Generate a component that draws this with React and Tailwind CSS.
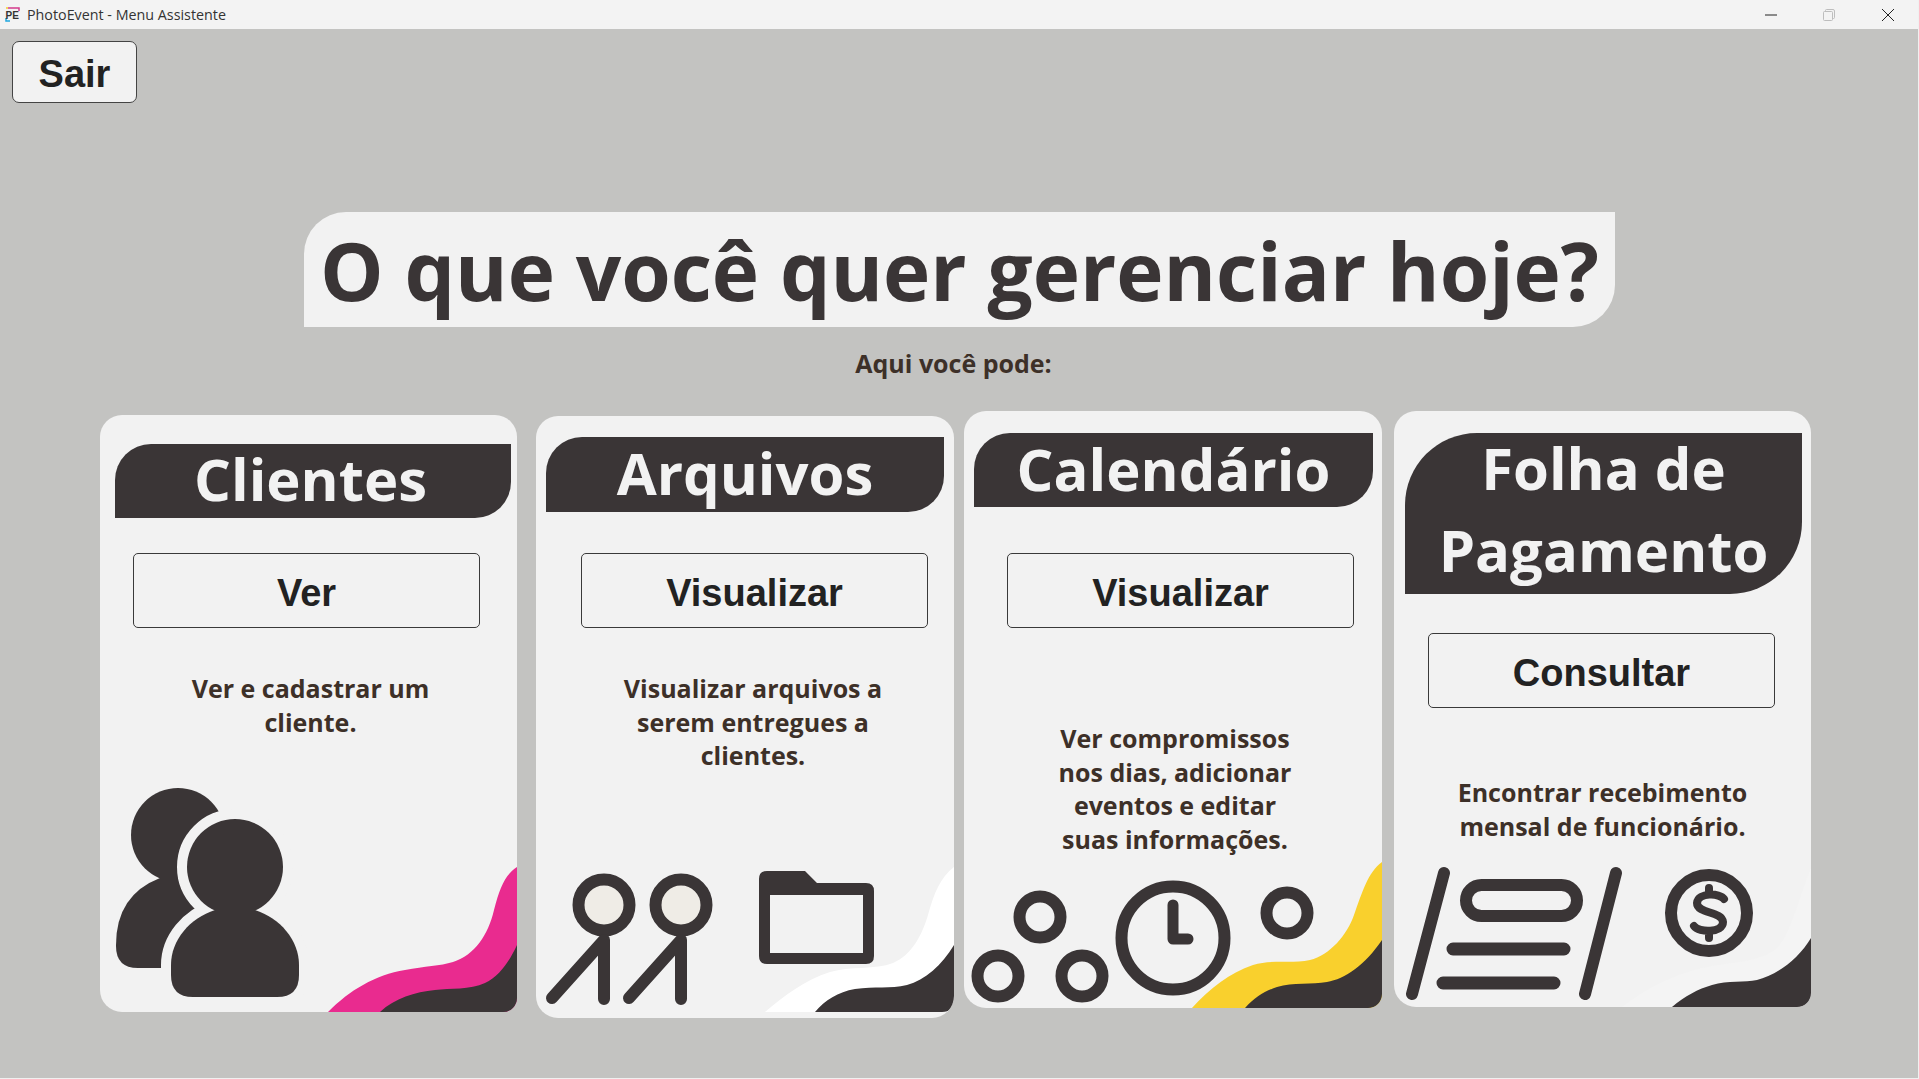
import React from 'react';

const DARK = '#3a3536';
const CARD = '#f2f2f2';

const ClientesArt = () => (
  <svg className="absolute bottom-0 left-0" width="417" height="232" viewBox="100 780 417 232">
    <circle cx="178" cy="835" r="47" fill={DARK} />
    <path d="M116 945 Q116 895 160 878 L230 878 L230 968 L138 968 Q116 968 116 946 Z" fill={DARK} />
    <g fill={CARD} stroke={CARD} strokeWidth="20">
      <circle cx="235" cy="867" r="48" />
      <path d="M171 965 C171 940 190 918 215 910 L255 910 C280 918 299 940 299 965 V975 Q299 997 277 997 H193 Q171 997 171 975 Z" />
    </g>
    <g fill={DARK}>
      <circle cx="235" cy="867" r="48" />
      <path d="M171 965 C171 940 190 918 215 910 L255 910 C280 918 299 940 299 965 V975 Q299 997 277 997 H193 Q171 997 171 975 Z" />
    </g>
    <path d="M328 1012 C350 990 375 975 405 970 C425 966 440 966 453 962 C475 955 488 935 494 910 C500 887 505 875 517 867 V1012 Z" fill="#e92b8f" />
    <path d="M380 1012 C395 998 415 992 435 990 C450 988 470 990 485 983 C500 976 510 960 517 945 V1012 Z" fill={DARK} />
  </svg>
);

const ArquivosArt = () => (
  <svg className="absolute bottom-0 left-0" width="418" height="202" viewBox="536 816 418 202">
    <path d="M765 1012 C785 995 805 980 830 972 C850 966 875 970 893 963 C912 955 922 935 928 915 C934 893 940 878 954 867 V1012 Z" fill="#ffffff" />
    <path d="M815 1012 C825 1000 838 992 855 989 C875 986 890 989 907 985 C925 980 942 965 954 945 V1000 Q954 1012 942 1012 Z" fill={DARK} />
    <g fill="none" stroke={DARK} strokeWidth="12" strokeLinecap="round">
      <circle cx="604" cy="905" r="25.5" fill="#efece6" />
      <path d="M604 940 V999 M604 940 L552 998" />
      <circle cx="681" cy="905" r="25.5" fill="#efece6" />
      <path d="M681 940 V999 M681 940 L629 998" />
    </g>
    <path fillRule="evenodd" fill={DARK} d="M767 871 H805 L817 883 H866 Q874 883 874 891 V956 Q874 964 866 964 H767 Q759 964 759 956 V879 Q759 871 767 871 Z M770 895 V953 H863 V895 Z" />
  </svg>
);

const CalendarioArt = () => (
  <svg className="absolute bottom-0 left-0" width="418" height="158" viewBox="964 850 418 158">
    <path d="M1192 1008 C1210 988 1230 973 1253 965 C1272 959 1292 964 1310 960 C1330 955 1347 935 1354 915 C1362 893 1368 872 1382 862 V1008 Z" fill="#f9d02d" />
    <path d="M1245 1008 C1255 997 1265 991 1277 987 C1293 982 1312 985 1327 982 C1345 979 1365 965 1382 940 V996 Q1382 1008 1370 1008 Z" fill={DARK} />
    <g fill="none" stroke={DARK} strokeWidth="12">
      <circle cx="1040" cy="917" r="20.5" />
      <circle cx="998" cy="976" r="20.5" />
      <circle cx="1082" cy="976" r="20.5" />
      <circle cx="1287" cy="913" r="20.5" />
      <circle cx="1173" cy="938" r="51.5" />
      <path d="M1173 905 V939 H1188" strokeWidth="11" strokeLinecap="round" strokeLinejoin="round" />
    </g>
  </svg>
);

const FolhaArt = () => (
  <svg className="absolute bottom-0 left-0" width="417" height="177" viewBox="1394 830 417 177">
    <path d="M1622 1007 C1650 985 1680 972 1712 966 C1735 962 1757 962 1775 950 C1790 938 1798 900 1811 868 V1007 Z" fill="#f4f4f4" />
    <path d="M1672 1007 C1685 996 1698 989 1712 985 C1728 980 1745 983 1757 980 C1775 976 1798 960 1811 938 V996 Q1811 1007 1800 1007 Z" fill={DARK} />
    <g fill="none" stroke={DARK} strokeLinecap="round">
      <path d="M1444 873 L1412 994 M1616 873 L1585 994" strokeWidth="12" />
      <rect x="1466" y="885" width="111" height="31" rx="15.5" strokeWidth="12" />
      <path d="M1453 949 H1564 M1443 983 H1554" strokeWidth="13" />
      <circle cx="1709" cy="913" r="38" strokeWidth="12" />
      <path d="M1724 899 C1720 893 1698 892 1697 903 C1697 914 1722 911 1723 922 C1723 933 1699 933 1694 926 M1709 888 V894 M1709 932 V938" strokeWidth="8" />
    </g>
  </svg>
);

const cards = [
  {
    title: ['Clientes'],
    button: 'Ver',
    desc: ['Ver e cadastrar um', 'cliente.'],
    box: 'mt-[4px] w-[417px] h-[597px] rounded-br-[14px]',
    head: 'ml-[15px] mt-[29px] w-[396px] h-[74px] pb-[5px] pr-[5px] rounded-tl-[36px] rounded-br-[36px]',
    btn: 'ml-[33px] mt-[35px]',
    text: 'mt-[44px] ml-[4px]',
    Art: ClientesArt,
  },
  {
    title: ['Arquivos'],
    button: 'Visualizar',
    desc: ['Visualizar arquivos a', 'serem entregues a', 'clientes.'],
    box: 'mt-[5px] ml-[19px] w-[418px] h-[602px]',
    head: 'ml-[10px] mt-[21px] w-[398px] h-[75px] pb-[4px] rounded-tl-[36px] rounded-br-[36px]',
    btn: 'ml-[45px] mt-[41px]',
    text: 'mt-[44px] ml-[16px]',
    Art: ArquivosArt,
  },
  {
    title: ['Calendário'],
    button: 'Visualizar',
    desc: ['Ver compromissos', 'nos dias, adicionar', 'eventos e editar', 'suas informações.'],
    box: 'ml-[10px] w-[418px] h-[597px] rounded-br-[14px]',
    head: 'ml-[10px] mt-[22px] w-[399px] h-[74px] pb-[3px] rounded-tl-[36px] rounded-br-[36px]',
    btn: 'ml-[43px] mt-[46px]',
    text: 'mt-[94px] ml-[4px]',
    Art: CalendarioArt,
  },
  {
    title: ['Folha de', 'Pagamento'],
    button: 'Consultar',
    desc: ['Encontrar recebimento', 'mensal de funcionário.'],
    box: 'ml-[12px] w-[417px] h-[596px] rounded-br-[14px]',
    head: 'ml-[11px] mt-[22px] w-[397px] h-[161px] pb-[10px] rounded-tl-[72px] rounded-br-[72px]',
    btn: 'ml-[34px] mt-[39px]',
    text: 'mt-[68px]',
    Art: FolhaArt,
  },
];

function Card({ card }) {
  const { Art } = card;
  return (
    <div className={`relative shrink-0 overflow-hidden rounded-[22px] bg-[#f2f2f2] ${card.box}`}>
      <div className={`flex flex-col items-center justify-center bg-[#3a3536] font-['Open_Sans',sans-serif] text-[58px] font-bold leading-[82px] text-[#f2f2f2] ${card.head}`}>
        {card.title.map(line => (
          <div key={line}>{line}</div>
        ))}
      </div>
      <button className={`block h-[75px] w-[347px] rounded-[5px] border border-[#3a3a3a] pt-[5px] font-['Liberation_Sans',sans-serif] text-[38px] font-bold text-[#222222] ${card.btn}`}>
        {card.button}
      </button>
      <div className={`text-center font-['Open_Sans',sans-serif] text-[25px] font-bold leading-[33.5px] text-[#3d3028] ${card.text}`}>
        {card.desc.map(line => (
          <div key={line}>{line}</div>
        ))}
      </div>
      <Art />
    </div>
  );
}

export default function App() {
  return (
    <div className="flex h-[1079px] w-[1919px] flex-col overflow-hidden border-b border-r border-[#f0f0f0] bg-[#c3c3c1]">
      {/* Window title bar */}
      <div className="flex h-[29px] shrink-0 items-center bg-[#f3f3f3] font-['Open_Sans',sans-serif] text-[14.3px] text-[#333333]">
        <svg className="ml-[5px] mr-[7px]" width="15" height="15" viewBox="0 0 15 15">
          <path d="M3 1 H14 V4" fill="none" stroke="#d33b8c" strokeWidth="1.5" />
          <path d="M1 11 V14 H5" fill="none" stroke="#20a8e0" strokeWidth="1.5" />
          <path d="M1 1 H3" stroke="#f5d327" strokeWidth="1.5" />
          <text x="0.5" y="11.5" fontFamily="Liberation Sans, sans-serif" fontSize="10" fontWeight="700" fill="#333333">PE</text>
        </svg>
        <span>PhotoEvent - Menu Assistente</span>
        <div className="ml-auto flex items-center">
          <svg width="12" height="12" viewBox="0 0 12 12" className="mr-[46px]">
            <path d="M0 6 H12" stroke="#222222" />
          </svg>
          <svg width="12" height="12" viewBox="0 0 12 12" className="mr-[47px]">
            <path d="M2.5 2.5 V1.5 Q2.5 0.5 3.5 0.5 H10 Q11.5 0.5 11.5 2 V8.5 Q11.5 9.5 10.5 9.5 H9.5 M1.5 2.5 H8.5 Q9.5 2.5 9.5 3.5 V10.5 Q9.5 11.5 8.5 11.5 H1.5 Q0.5 11.5 0.5 10.5 V3.5 Q0.5 2.5 1.5 2.5 Z" fill="none" stroke="#bdbdbd" />
          </svg>
          <svg width="12" height="12" viewBox="0 0 12 12" className="mr-[24px]">
            <path d="M0 0 L12 12 M12 0 L0 12" stroke="#222222" />
          </svg>
        </div>
      </div>

      <button className="ml-[12px] mt-[12px] h-[62px] w-[125px] shrink-0 rounded-[7px] border border-[#444444] bg-[#f2f2f2] pt-[4px] font-['Liberation_Sans',sans-serif] text-[38px] font-bold text-[#222222]">
        Sair
      </button>

      <h1 className="ml-[304px] mt-[109px] flex h-[115px] w-[1311px] shrink-0 items-center justify-center rounded-tl-[42px] rounded-br-[42px] bg-[#f2f2f2] font-['Open_Sans',sans-serif] text-[80px] font-bold text-[#3a3536]">
        O que você quer gerenciar hoje?
      </h1>

      <p className="ml-[-11px] mt-[20px] text-center font-['Open_Sans',sans-serif] text-[25px] font-bold leading-[33px] text-[#3d3028]">
        Aqui você pode:
      </p>

      <div className="ml-[100px] mt-[31px] flex items-start">
        {cards.map(card => (
          <Card key={card.title[0]} card={card} />
        ))}
      </div>
    </div>
  );
}
